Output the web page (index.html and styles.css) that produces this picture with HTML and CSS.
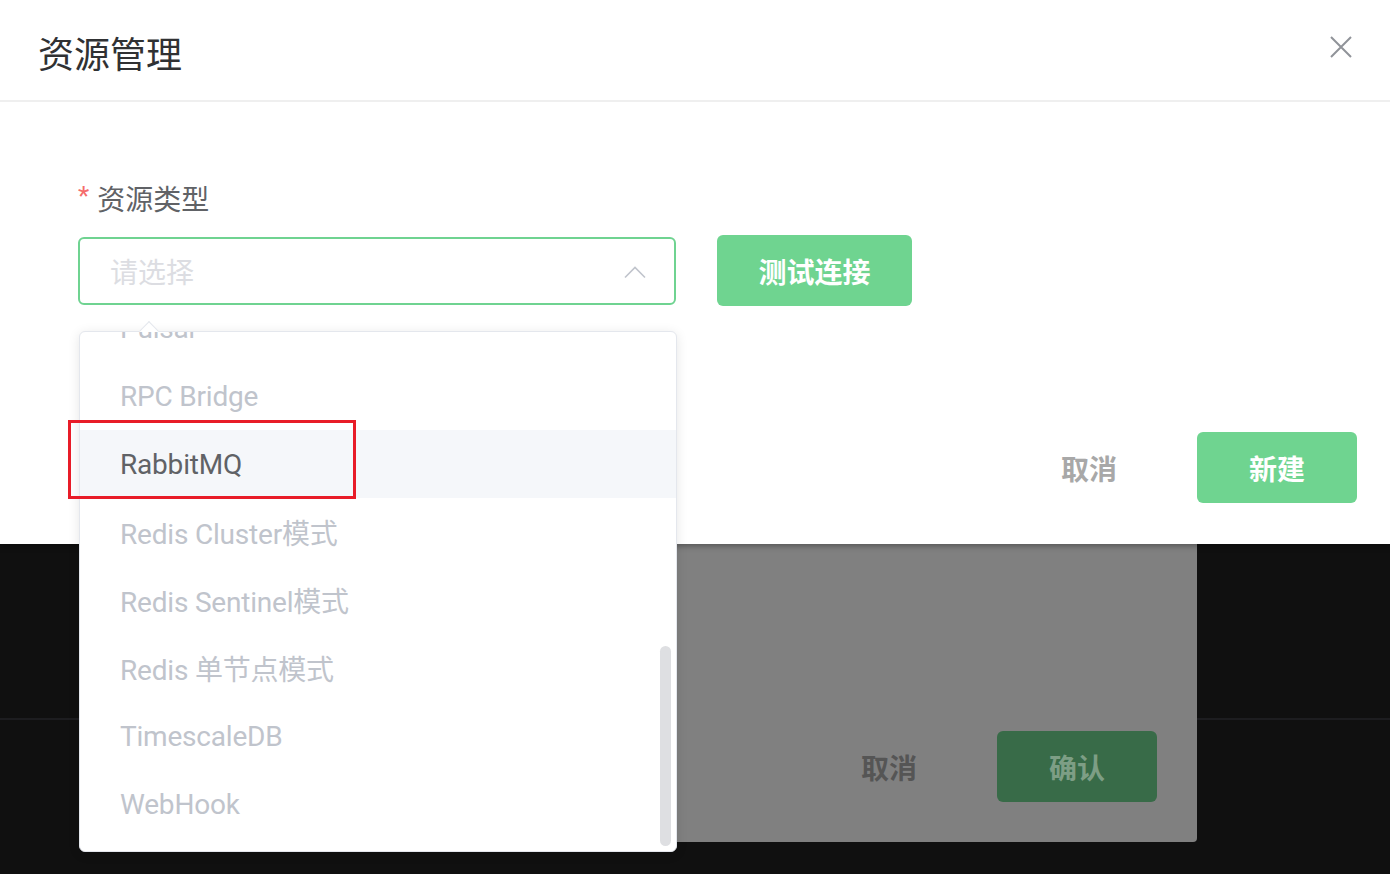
FILE: index.html
```html
<!DOCTYPE html>
<html lang="zh-CN">
<head>
<meta charset="utf-8">
<title>资源管理</title>
<link rel="stylesheet" href="styles.css">
</head>
<body>
<div class="screen">
  <div class="desk">
    <div class="desk-line"></div>
    <div class="back-dialog">
      <div class="dlg-footer">
        <button class="btn-text back-cancel">取消</button>
        <button class="btn-primary back-ok">确认</button>
      </div>
    </div>
  </div>

  <section class="dialog">
    <header class="dialog-header">
      <h2 class="dialog-title">资源管理</h2>
      <button class="close" aria-label="关闭">
        <svg width="22" height="22" viewBox="0 0 22 22"><path d="M1 1L21 21M21 1L1 21" stroke="#909399" stroke-width="2" fill="none"/></svg>
      </button>
    </header>
    <div class="dialog-body">
      <div class="form-label"><span class="req">*</span>资源类型</div>
      <div class="form-row">
        <div class="select">
          <span class="placeholder">请选择</span>
          <svg class="chev" width="22" height="14" viewBox="0 0 22 14"><path d="M1 12.5L11 2.5L21 12.5" stroke="#c0c4cc" stroke-width="1.6" fill="none"/></svg>
        </div>
        <button class="btn-primary test-btn">测试连接</button>
      </div>
    </div>
    <footer class="dlg-footer">
      <button class="btn-text">取消</button>
      <button class="btn-primary">新建</button>
    </footer>
  </section>

  <div class="dropdown">
    <div class="arrow"></div>
    <div class="dd-viewport">
      <ul class="dd-list">
        <li>Pulsar</li>
        <li>RPC Bridge</li>
        <li class="hover">RabbitMQ</li>
        <li>Redis Cluster模式</li>
        <li>Redis Sentinel模式</li>
        <li>Redis 单节点模式</li>
        <li>TimescaleDB</li>
        <li>WebHook</li>
      </ul>
    </div>
    <div class="thumb"></div>
  </div>

  <div class="highlight"></div>
</div>
</body>
</html>
```

FILE: styles.css
```css
* { box-sizing: border-box; }
html, body { margin: 0; padding: 0; }
body {
  background: #101010;
  font-family: Roboto, "Noto Sans CJK SC", "Noto Sans", sans-serif;
  overflow: hidden;
}
button { font-family: inherit; border: 0; background: none; padding: 0; cursor: pointer; }

.screen {
  position: relative;
  width: 1390px;
  height: 874px;
  overflow: hidden;
}

/* underlying page (dimmed) */
.desk {
  position: absolute;
  inset: 0;
  background: #101010;
}
.desk-line {
  position: absolute;
  left: 0; right: 0;
  top: 718px;
  height: 2px;
  background: #1d1d20;
}
.back-dialog {
  position: absolute;
  left: 240px;
  top: 300px;
  width: 957px;
  height: 542px;
  background: #808080;
  border-radius: 0 0 4px 4px;
  display: flex;
  flex-direction: column;
  justify-content: flex-end;
}
.back-dialog .dlg-footer { padding: 0 40px 40px 0; }

/* front dialog */
.dialog {
  position: relative;
  height: 544px;
  background: #fff;
  box-shadow: 0 2px 6px rgba(0,0,0,0.35);
  display: flex;
  flex-direction: column;
}
.dialog-header {
  height: 102px;
  border-bottom: 2px solid #efefef;
  display: flex;
  align-items: center;
  justify-content: space-between;
  padding: 4px 38px 0 38px;
}
.dialog-title {
  margin: 0;
  font-size: 36px;
  font-weight: 400;
  color: #303133;
  font-family: "Noto Sans CJK SC", sans-serif;
}
.close {
  width: 22px;
  height: 22px;
  margin-top: -10px;
  display: flex;
}

.dialog-body {
  padding: 76px 0 0 78px;
}
.form-label {
  height: 40px;
  display: flex;
  align-items: center;
  font-size: 28px;
  color: #606266;
  font-family: "Noto Sans CJK SC", sans-serif;
}
.req {
  color: #f56c6c;
  font-size: 26px;
  margin-right: 8px;
  margin-top: -4px;
  font-family: Roboto, sans-serif;
}
.form-row {
  margin-top: 17px;
  display: flex;
  align-items: center;
  gap: 41px;
}
.select {
  width: 598px;
  height: 68px;
  border: 2px solid #6fd391;
  border-radius: 6px;
  display: flex;
  align-items: center;
  justify-content: space-between;
  padding: 0 28px 0 30px;
}
.placeholder {
  font-size: 28px;
  color: #dcdde2;
  font-family: "Noto Sans CJK SC", sans-serif;
}
.chev { margin-top: 2px; }

.btn-primary {
  background: #6fd490;
  color: #fff;
  font-size: 28px;
  font-weight: 700;
  border-radius: 6px;
  width: 160px;
  height: 71px;
  font-family: "Noto Sans CJK SC", sans-serif;
}
.test-btn { width: 195px; }
.btn-text {
  width: 160px;
  height: 71px;
  font-size: 28px;
  font-weight: 700;
  color: #a8a8a8;
  font-family: "Noto Sans CJK SC", sans-serif;
}
.dlg-footer {
  margin-top: auto;
  display: flex;
  justify-content: flex-end;
  gap: 28px;
  padding: 0 33px 41px 0;
}
.back-dialog .back-cancel { color: #555555; }
.back-dialog .back-ok { background: #386b48; color: #7d9e85; }

/* dropdown overlay */
.dropdown {
  position: absolute;
  left: 79px;
  top: 331px;
  width: 598px;
  height: 521px;
  background: #fff;
  border: 1px solid #e4e7ed;
  border-radius: 6px;
  box-shadow: 0 2px 12px rgba(0,0,0,0.1);
}
.arrow {
  position: absolute;
  left: 62px;
  top: -8px;
  width: 14px;
  height: 14px;
  background: #fff;
  border-left: 1px solid #e4e7ed;
  border-top: 1px solid #e4e7ed;
  transform: rotate(45deg);
}
.dd-viewport {
  position: relative;
  height: 100%;
  overflow: hidden;
  border-radius: 6px;
}
.dd-list {
  list-style: none;
  margin: -38px 0 0 0;
  padding: 0;
}
.dd-list li {
  height: 68px;
  display: flex;
  align-items: center;
  padding-left: 40px;
  font-size: 28px;
  letter-spacing: -0.2px;
  color: #c0c4cc;
  white-space: nowrap;
}
.dd-list li.hover {
  background: #f5f7fa;
  color: #606266;
}
.thumb {
  position: absolute;
  right: 5px;
  top: 314px;
  width: 11px;
  height: 200px;
  border-radius: 6px;
  background: #dedfe2;
}

.highlight {
  position: absolute;
  left: 68px;
  top: 420px;
  width: 288px;
  height: 79px;
  border: 3px solid #e81c28;
}
```
